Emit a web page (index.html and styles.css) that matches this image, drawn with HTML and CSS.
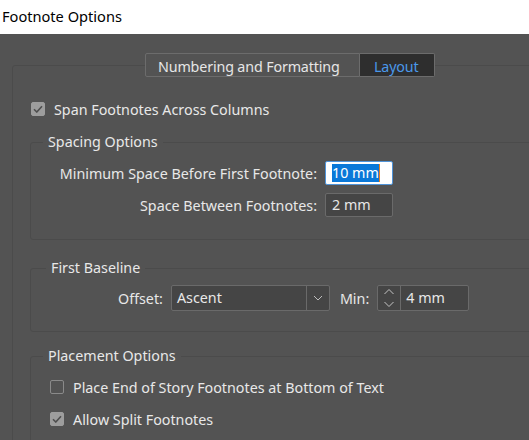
FILE: index.html
```html
<!DOCTYPE html>
<html lang="en">
<head>
    <meta charset="UTF-8">
    <title>Footnote Options</title>
    <link rel="stylesheet" href="styles.css">
</head>
<body>

    <div class="titlebar">Footnote Options</div>

    <div class="dialog">
        <fieldset class="panel">
            <legend class="tabs">
                <span class="tab">Numbering and Formatting</span>
                <span class="tab active">Layout</span>
            </legend>

            <label class="check span-row">
                <span class="box checked">
                    <svg width="10" height="8" viewBox="0 0 10 8"><path d="M1 4.2 L3.8 7 L9 1.2" fill="none" stroke="#4e4e4e" stroke-width="1.6"/></svg>
                </span>
                Span Footnotes Across Columns
            </label>

            <fieldset class="group spacing">
                <legend>Spacing Options</legend>
                <div class="form-grid">
                    <span class="label">Minimum Space Before First Footnote:</span>
                    <span class="field focused"><span class="sel">10 mm</span><span class="caret"></span></span>
                    <span class="label">Space Between Footnotes:</span>
                    <span class="field">2 mm</span>
                </div>
            </fieldset>

            <fieldset class="group baseline">
                <legend>First Baseline</legend>
                <div class="baseline-row">
                    <span class="label">Offset:</span>
                    <span class="dropdown">
                        <span class="dropdown-value">Ascent</span>
                        <span class="dropdown-arrow">
                            <svg width="10" height="6" viewBox="0 0 10 6"><path d="M1 1 L5 5 L9 1" fill="none" stroke="#bdbdbd" stroke-width="1"/></svg>
                        </span>
                    </span>
                    <span class="label min-label">Min:</span>
                    <span class="spin-field">
                        <span class="spinner">
                            <svg width="12" height="20" viewBox="0 0 12 20"><path d="M1.5 6 L6 1.5 L10.5 6 M1.5 14 L6 18.5 L10.5 14" fill="none" stroke="#c4c4c4" stroke-width="1"/></svg>
                        </span>
                        <span class="spin-value">4 mm</span>
                    </span>
                </div>
            </fieldset>

            <fieldset class="group placement">
                <legend>Placement Options</legend>
                <label class="check">
                    <span class="box"></span>
                    Place End of Story Footnotes at Bottom of Text
                </label>
                <label class="check">
                    <span class="box checked">
                        <svg width="10" height="8" viewBox="0 0 10 8"><path d="M1 4.2 L3.8 7 L9 1.2" fill="none" stroke="#4e4e4e" stroke-width="1.6"/></svg>
                    </span>
                    Allow Split Footnotes
                </label>
            </fieldset>
        </fieldset>
    </div>

</body>
</html>
```

FILE: styles.css
```css
        body {
            margin: 0;
            width: 529px;
            height: 440px;
            overflow: hidden;
            font-family: "Noto Sans", "Open Sans", sans-serif;
            font-size: 14.3px;
            background: #535353;
            color: #e8e8e8;
        }
        .titlebar {
            height: 34px;
            box-sizing: border-box;
            padding: 6px 0 0 2px;
            line-height: 20px;
            background: #ffffff;
            color: #000000;
            font-size: 14.6px;
        }
        .dialog {
            padding: 19px 0 0 12px;
        }
        fieldset {
            margin: 0;
            padding: 0;
            min-width: 0;
        }
        .panel {
            width: 560px;
            height: 420px;
            border: 1px solid #4b4b4b;
            border-radius: 3px;
        }
        .tabs {
            display: flex;
            margin-left: 132px;
            padding: 0;
            height: 24px;
        }
        .tab {
            height: 24px;
            box-sizing: border-box;
            line-height: 22px;
            padding: 2px 10px 0 12px;
            width: 215px;
            border: 1px solid #6c6c6c;
            border-radius: 2px 0 0 2px;
            color: #e6e6e6;
            letter-spacing: -0.15px;
        }
        .tab.active {
            width: 75px;
            padding: 2px 0 0 14px;
            border-left: none;
            border-radius: 0 2px 2px 0;
            background: #2e2e2e;
            color: #4a98ea;
        }
        .check {
            display: flex;
            align-items: center;
            height: 20px;
            gap: 9px;
        }
        .span-row {
            margin: 22px 0 0 18px;
        }
        .box {
            width: 14px;
            height: 14px;
            box-sizing: border-box;
            border: 1px solid #8a8a8a;
            border-radius: 2px;
            display: flex;
            align-items: center;
            justify-content: center;
        }
        .box.checked {
            background: #9d9d9d;
            border-color: #9d9d9d;
        }
        .group {
            margin-left: 17px;
            width: 540px;
            border: 1px solid #4b4b4b;
            border-radius: 3px;
            box-sizing: border-box;
        }
        .group legend {
            margin-left: 12px;
            padding: 0 5px;
            line-height: 18px;
        }
        .spacing {
            margin-top: 14px;
            height: 107px;
        }
        .form-grid {
            display: grid;
            grid-template-columns: 286px 68px;
            column-gap: 8px;
            row-gap: 8px;
            align-items: center;
            margin-top: 10px;
        }
        .label {
            text-align: right;
        }
        .field {
            height: 24px;
            box-sizing: border-box;
            border: 1px solid #6a6a6a;
            border-radius: 2px;
            background: #454545;
            padding: 0 6px;
            line-height: 22px;
            display: flex;
            align-items: center;
        }
        .field.focused {
            background: #ffffff;
            border-color: #4f93d8;
        }
        .sel {
            background: #0a78d8;
            color: #ffffff;
            line-height: 18px;
        }
        .caret {
            width: 1px;
            height: 18px;
            background: #e87d1e;
        }
        .baseline {
            margin-top: 19px;
            height: 73px;
        }
        .group.baseline legend {
            margin-left: 15px;
        }
        .baseline-row {
            display: flex;
            align-items: center;
            margin: 8px 0 0 87px;
        }
        .dropdown {
            display: flex;
            margin-left: 8px;
            width: 159px;
            height: 26px;
            box-sizing: border-box;
            border: 1px solid #6a6a6a;
            border-radius: 2px;
            background: #454545;
        }
        .dropdown-value {
            flex: 1;
            padding-left: 5px;
            line-height: 24px;
        }
        .dropdown-arrow {
            width: 22px;
            border-left: 1px solid #6a6a6a;
            display: flex;
            align-items: center;
            justify-content: center;
        }
        .min-label {
            margin-left: 10px;
        }
        .spin-field {
            display: flex;
            margin-left: 8px;
            width: 92px;
            height: 26px;
            box-sizing: border-box;
            border: 1px solid #6a6a6a;
            border-radius: 2px;
            background: #454545;
        }
        .spinner {
            width: 22px;
            border-right: 1px solid #6a6a6a;
            display: flex;
            align-items: center;
            justify-content: center;
        }
        .spin-value {
            padding-left: 5px;
            line-height: 24px;
        }
        .placement {
            margin-top: 15px;
            height: 120px;
        }
        .placement .check {
            margin: 12px 0 0 19px;
        }
        .placement .check + .check {
            margin-top: 12px;
        }
```
